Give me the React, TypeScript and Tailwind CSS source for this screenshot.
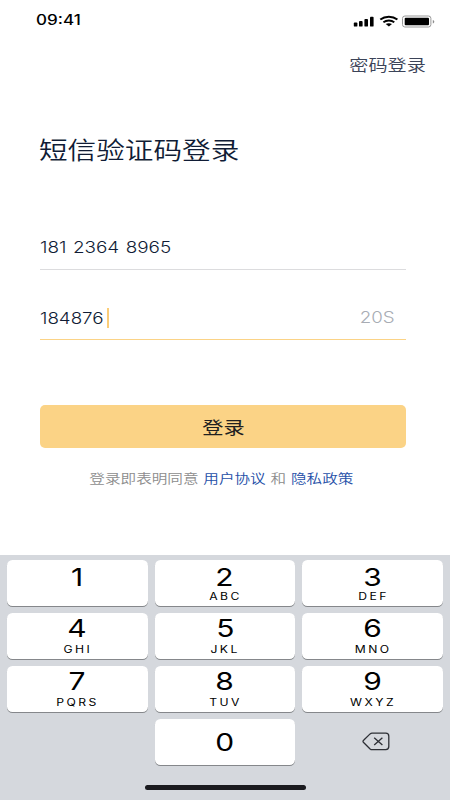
import React from 'react';
import clsx from 'clsx';

interface KeyDef {
  digit: string;
  letters?: string;
}

const KEYS: KeyDef[] = [
  { digit: '1' },
  { digit: '2', letters: 'ABC' },
  { digit: '3', letters: 'DEF' },
  { digit: '4', letters: 'GHI' },
  { digit: '5', letters: 'JKL' },
  { digit: '6', letters: 'MNO' },
  { digit: '7', letters: 'PQRS' },
  { digit: '8', letters: 'TUV' },
  { digit: '9', letters: 'WXYZ' },
];

interface WideProps {
  children: React.ReactNode;
  className?: string;
}

// Extended-width lettering used across the screen
const Wide: React.FC<WideProps> = ({ children, className }) => (
  <span className={clsx('inline-block scale-x-[1.218] whitespace-pre', className)}>{children}</span>
);

const StatusBar: React.FC = () => (
  <div className="flex h-10 items-start justify-between pt-[10px] pr-[15px] pl-[36px]">
    <Wide className="origin-left text-[14px] leading-5 font-medium text-black">09:41</Wide>
    <svg className="mt-[5px] h-[13px] w-[82px]" viewBox="0 0 82 13" fill="none">
      <g fill="#000">
        <rect x="0.8" y="7.6" width="3.6" height="4" rx="0.9" />
        <rect x="6" y="6" width="3.6" height="5.6" rx="0.9" />
        <rect x="11.4" y="4" width="3.6" height="7.6" rx="0.9" />
        <rect x="17" y="1.8" width="3.6" height="9.8" rx="0.9" />
        <rect x="51.7" y="2.8" width="24.3" height="7.4" rx="1" />
        <path d="M79.8 5v3.6c.9-.3 1.5-1 1.5-1.8s-.6-1.5-1.5-1.8z" fillOpacity=".45" />
        <path d="M32.7 9.1c1.9-1.3 4.4-1.3 6.3 0L35.9 11.5z" />
      </g>
      <path d="M27.3 4.5c4.9-3.7 12.2-3.7 17.1 0" stroke="#000" strokeWidth="2.1" />
      <path d="M30.4 7.2c3.1-2.3 7.8-2.3 10.9 0" stroke="#000" strokeWidth="1.9" />
      <rect x="49.5" y="1" width="28.4" height="11" rx="2.4" stroke="#999" />
    </svg>
  </div>
);

const LoginForm: React.FC = () => (
  <main className="h-[515px] pr-[44.5px] pl-[39.5px]">
    <div className="-mr-[20.5px] flex h-[50px] justify-end pt-[14px]">
      <button className="flex h-6 items-center">
        <Wide className="origin-right text-[15.7px] leading-6 font-[350] text-[#3b4358]">密码登录</Wide>
      </button>
    </div>

    <h1 className="-ml-[1px] flex h-[121px] items-start pt-[43px]">
      <Wide className="origin-left text-[23.5px] leading-9 font-[350] text-[#101c35]">短信验证码登录</Wide>
    </h1>

    <div className="flex h-[59px] items-start border-b border-[#dcdcde] pt-[25px]">
      <Wide className="origin-left text-[15.5px] leading-6 font-[350] text-[#101c35] [word-spacing:1px]">
        181 2364 8965
      </Wide>
    </div>
    <div className="flex h-[70px] items-start justify-between border-b border-[#fbd386] pt-[36px]">
      <div className="flex h-6 items-center">
        <div className="w-[67.5px]">
          <Wide className="origin-left text-[15.4px] leading-6 font-[350] text-[#101c35]">184876</Wide>
        </div>
        <span className="h-5 w-[2px] bg-[#fbcd78]" />
      </div>
      <Wide className="mr-[10.5px] origin-right text-[15.4px] leading-6 font-light text-[#a8acb4]">20S</Wide>
    </div>

    <button className="mt-[65px] flex h-[43px] w-full items-center justify-center rounded-[5px] bg-[#fbd386] pt-[2px] pl-[1px]">
      <Wide className="text-[17.4px] leading-6 text-[#202020]">登录</Wide>
    </button>

    <p className="mt-[21px] flex justify-center pr-[2px]">
      <Wide className="text-[12.8px] leading-5 font-[350] text-[#8d8d8d] [word-spacing:0.4px]">
        登录即表明同意 <a className="text-[#2650a8]">用户协议</a> 和 <a className="text-[#2650a8]">隐私政策</a>
      </Wide>
    </p>
  </main>
);

const KeyCap: React.FC<KeyDef & { top: boolean }> = ({ digit, letters, top }) => (
  <button className="flex h-[46px] flex-col items-center rounded-[5.5px] bg-white text-black shadow-[0_1px_0_#85878b]">
    <span className={clsx('flex h-[30px] items-start', top ? 'pt-[5px]' : 'pt-[3px]')}>
      <Wide className="text-[24.6px] leading-[24px]">{digit}</Wide>
    </span>
    {letters && <Wide className="pl-px text-[10px] leading-3 tracking-[2px]">{letters}</Wide>}
  </button>
);

const Keypad: React.FC = () => (
  <div className="h-[245px] bg-[#d5d8dd] px-[7px] pt-[5px]">
    <div className="grid grid-cols-3 gap-[7px]">
      {KEYS.map((key, idx) => (
        <KeyCap key={key.digit} {...key} top={idx < 3} />
      ))}
      <button className="col-start-2 flex h-[46px] items-center justify-center rounded-[5.5px] bg-white text-black shadow-[0_1px_0_#85878b]">
        <Wide className="text-[24.6px] leading-[24px]">0</Wide>
      </button>
      <button className="flex h-[46px] items-center justify-center" aria-label="Delete">
        <svg className="mt-[-2px] ml-[7px] h-[19px] w-[28px]" viewBox="0 0 28 19" fill="none" stroke="#2d2f35">
          <path d="M10 1.2h13.8q3 0 3 3v10.4q0 3-3 3H10q-1 0-1.9-.7L1.6 10.5q-1.2-1.1 0-2.2L8.1 1.9Q9 1.2 10 1.2z" strokeWidth="1.3" />
          <path d="M12.2 5.8l8.2 7.2M20.4 5.8l-8.2 7.2" strokeWidth="1.3" />
        </svg>
      </button>
    </div>
    <div className="mx-auto mt-[20px] h-[5px] w-[161px] rounded-full bg-[#1b1b1f]" />
  </div>
);

const App: React.FC = () => (
  <div className="h-[800px] w-[450px] overflow-hidden bg-white font-['Inter','Noto_Sans_CJK_SC',sans-serif]">
    <StatusBar />
    <LoginForm />
    <Keypad />
  </div>
);

export default App;
